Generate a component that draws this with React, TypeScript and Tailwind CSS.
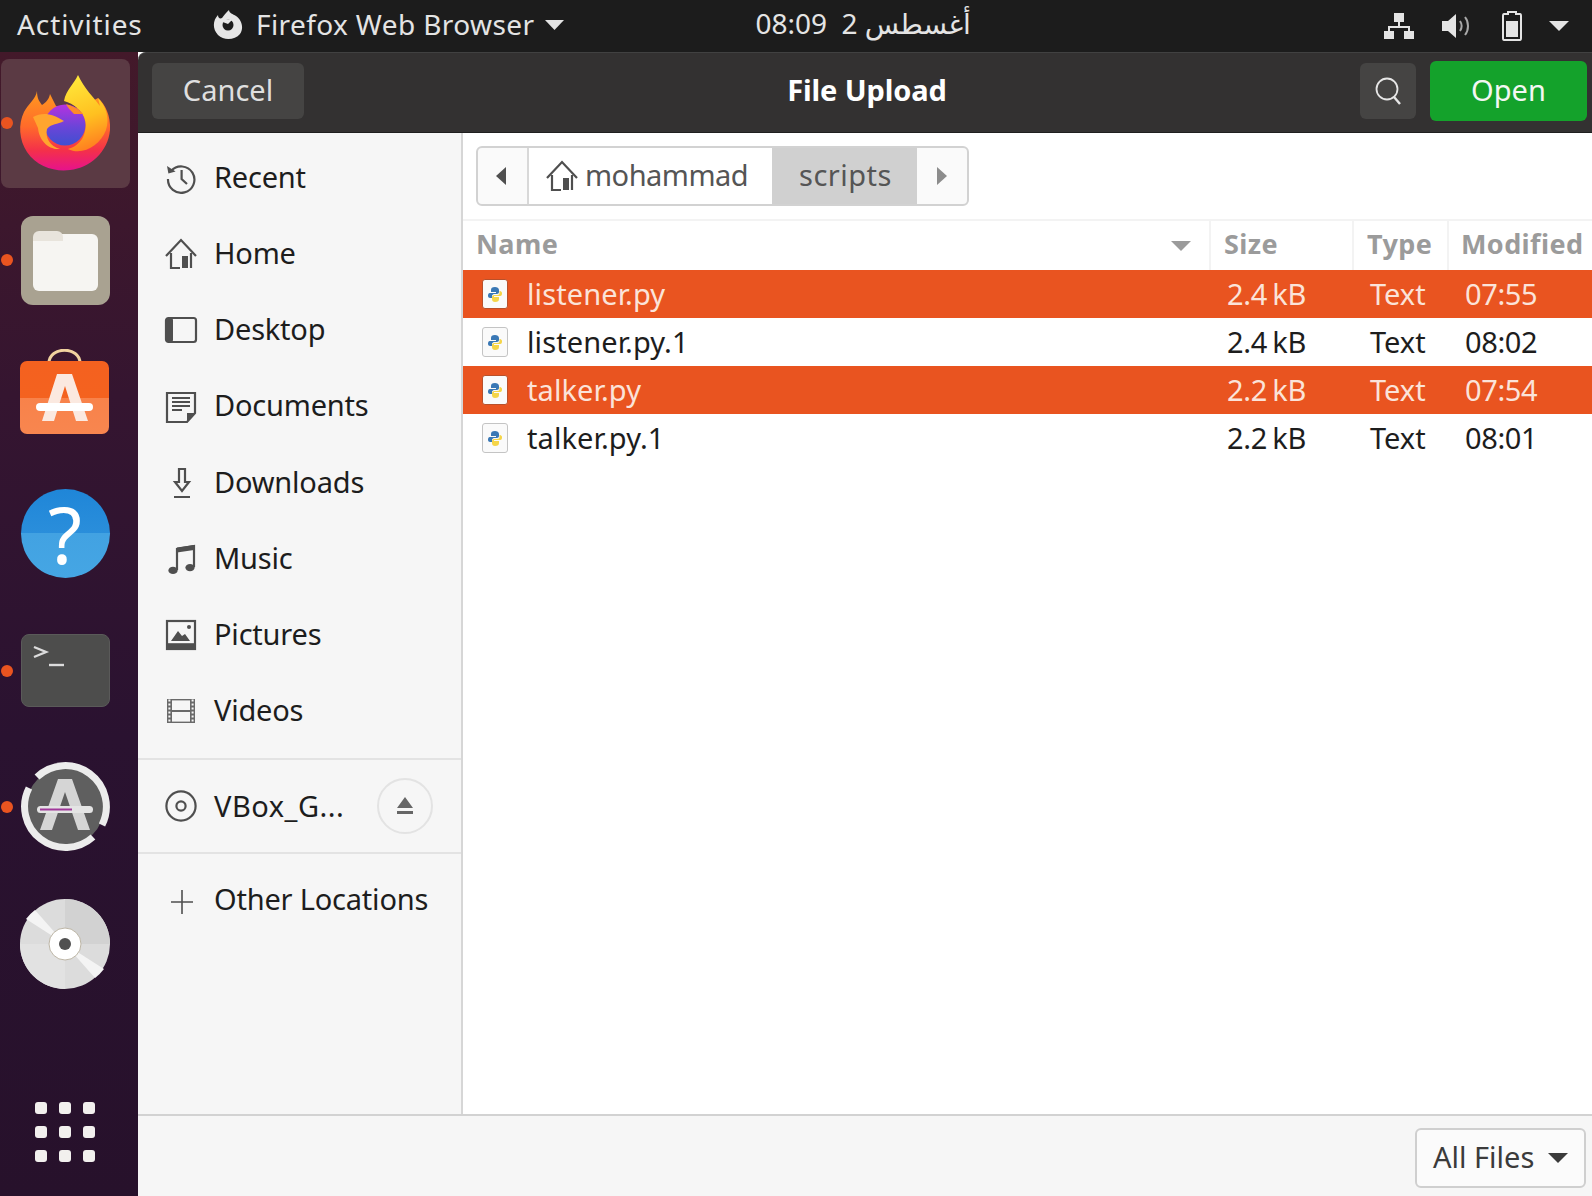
import React from 'react';

const uiFont = "font-['Noto_Sans','Open_Sans',sans-serif]";

function FirefoxIcon() {
  return (
    <svg width="110" height="110" viewBox="0 0 110 110" className="-my-2">
      <defs>
        <linearGradient id="ffBody" x1="0.5" y1="0" x2="0.5" y2="1">
          <stop offset="0" stopColor="#ff9a1f" />
          <stop offset="0.45" stopColor="#ff6a2a" />
          <stop offset="0.75" stopColor="#f4304a" />
          <stop offset="1" stopColor="#e6128c" />
        </linearGradient>
        <linearGradient id="ffFlame" x1="0.4" y1="0" x2="0.6" y2="1">
          <stop offset="0" stopColor="#ffe83a" />
          <stop offset="0.55" stopColor="#ffc020" />
          <stop offset="1" stopColor="#ff7a20" />
        </linearGradient>
        <linearGradient id="ffGlobe" x1="0.5" y1="0" x2="0.5" y2="1">
          <stop offset="0" stopColor="#b632e0" />
          <stop offset="0.55" stopColor="#6a45d8" />
          <stop offset="1" stopColor="#3f4fd0" />
        </linearGradient>
      </defs>
      <path d="M27 23 C26 31 18 36 14 44 C8 56 9 72 17 84 C27 99 45 104 60 102 C80 100 98 84 100 62 C101 48 95 36 88 30 L70 40 L46 38 L40 26 C39 32 35 35 32 37 C29 33 27 30 27 23 Z" fill="url(#ffBody)" />
      <path d="M68 7 C64 16 56 22 54 33 C64 36 72 42 75 52 C78 66 70 78 58 81 C72 88 90 78 96 62 C100 50 96 38 88 30 L90 38 C84 30 74 20 68 7 Z" fill="url(#ffFlame)" />
      <circle cx="55" cy="57" r="20.5" fill="url(#ffGlobe)" />
      <path d="M56 36 C62 38 68 40 73 46 L64 46 C60 42 58 40 56 36 Z" fill="#ff8a2a" />
      <path d="M23 49 C32 44 42 45 54 53 C47 57 42 55 37 61 C35 70 40 78 50 81 C38 82 29 72 28 60 Z" fill="#ffa52e" />
    </svg>
  );
}

function FilesIcon() {
  return (
    <div className="w-[89px] h-[89px] rounded-xl bg-[#a9a291] flex items-center justify-center relative">
      <div className="w-[65px] h-[57px] rounded-md bg-[#f6f5f2] mt-1" />
      <div className="absolute left-[12px] top-[15px] w-[30px] h-[10px] rounded-t-md bg-[#e8e4dc]" />
    </div>
  );
}

function SoftwareIcon() {
  return (
    <svg width="90" height="85" viewBox="0 0 90 85" className="-translate-y-[5px]">
      <defs>
        <linearGradient id="bag" x1="0" y1="0" x2="0" y2="1">
          <stop offset="0" stopColor="#f4611f" />
          <stop offset="0.5" stopColor="#f4621f" />
          <stop offset="0.5" stopColor="#f8824a" />
          <stop offset="1" stopColor="#f8864f" />
        </linearGradient>
      </defs>
      <path d="M29 14 C29 -3 60 -3 60 14" fill="none" stroke="#f1d29f" strokeWidth="3" />
      <rect x="0" y="12" width="89" height="73" rx="7" fill="url(#bag)" />
      <path d="M37 25 H52 L68 72 H56 L45 37 L34 72 H22 Z" fill="#fbe9e0" />
      <rect x="16" y="54" width="57" height="8" rx="4" fill="#ffffff" />
    </svg>
  );
}

function HelpIcon() {
  return (
    <div className="w-[89px] h-[89px] rounded-full bg-[linear-gradient(#1f86d8_0%,#2a8edb_50%,#42a2e2_50%,#45a6e4_100%)] flex items-center justify-center text-white text-[78px] leading-none">
      ?
    </div>
  );
}

function TerminalIcon() {
  return (
    <div className="w-[89px] h-[73px] rounded-lg bg-[#4d4d4c] border border-[#5a5a59] relative">
      <svg className="absolute left-[11px] top-[10px]" width="32" height="24" viewBox="0 0 32 24">
        <path d="M1 2 L13 7 L1 12" fill="none" stroke="#dcdcdc" strokeWidth="2.4" />
        <path d="M16 20 H31" stroke="#dcdcdc" strokeWidth="2.4" />
      </svg>
    </div>
  );
}

function UpdaterIcon() {
  return (
    <svg width="90" height="90" viewBox="0 0 90 90">
      <circle cx="45" cy="45" r="39" fill="#5f5f5f" />
      <path d="M17 15 A41 41 0 0 1 82 63 M73 75 A41 41 0 0 1 9 26" fill="none" stroke="#ececec" strokeWidth="7" />
      <path d="M38 17 H52 L70 68 H58 L45 30 L32 68 H20 Z" fill="#d5d5d5" />
      <rect x="17" y="44" width="56" height="7" rx="3.5" fill="#e4e4e4" />
      <rect x="20" y="46.5" width="32" height="2" fill="#a0389a" />
    </svg>
  );
}

function DiscIcon() {
  return (
    <svg width="90" height="90" viewBox="0 0 90 90">
      <circle cx="45" cy="45" r="45" fill="#dcdcdc" />
      <path d="M45 45 L45 0 A45 45 0 0 1 90 45 Z" fill="#d2d2d2" />
      <path d="M45 45 L45 90 A45 45 0 0 1 0 45 Z" fill="#e2e2e2" />
      <path d="M45 45 L6 20 A45 45 0 0 1 15 11 Z" fill="#f4f4f4" />
      <path d="M45 45 L84 70 A45 45 0 0 1 75 79 Z" fill="#f4f4f4" />
      <circle cx="45" cy="45" r="16" fill="#ffffff" stroke="#bdb6a6" strokeWidth="1" />
      <circle cx="45" cy="45" r="6" fill="#505050" />
    </svg>
  );
}

function Dock() {
  const items = [
    { key: 'firefox', icon: <FirefoxIcon />, running: true, active: true },
    { key: 'files', icon: <FilesIcon />, running: true },
    { key: 'software', icon: <SoftwareIcon /> },
    { key: 'help', icon: <HelpIcon /> },
    { key: 'terminal', icon: <TerminalIcon />, running: true },
    { key: 'updater', icon: <UpdaterIcon />, running: true },
    { key: 'disc', icon: <DiscIcon /> },
  ];
  return (
    <div className="w-[138px] shrink-0 flex flex-col pt-[3px] pb-[34px] bg-[linear-gradient(#43192a_0%,#351530_30%,#2a1230_60%,#27112b_100%)]">
      {items.map((item) => (
        <div key={item.key} className="relative h-[136.8px] flex items-center justify-center">
          {item.active && <div className="absolute left-[1px] top-[4px] w-[129px] h-[129px] rounded-lg bg-[#5b3a44]" />}
          {item.running && <div className="absolute left-px top-1/2 -mt-[6px] w-3 h-3 rounded-full bg-[#e95420]" />}
          <div className="relative -ml-[8px] flex items-center justify-center">{item.icon}</div>
        </div>
      ))}
      <div className="mt-auto ml-[35px] grid grid-cols-3 gap-3 w-[60px]">
        {Array.from({ length: 9 }).map((_, i) => (
          <div key={i} className="w-3 h-3 rounded-[3px] bg-[#f2f0ee]" />
        ))}
      </div>
    </div>
  );
}

function TopBar() {
  return (
    <div className="h-[52px] shrink-0 bg-[#1c1c1c] text-[#e4e4e4] flex items-center text-[28px] whitespace-nowrap">
      <span className="ml-[17px] w-[195px] tracking-[0.9px] pb-[5px]">Activities</span>
      <svg width="32" height="32" viewBox="0 0 32 32" className="-mt-1">
        <path d="M17 2 C17 5 21 6 24 8 C30 12 32 20 28 26 C23 32 12 33 6 27 C0 21 1 12 6 7 C6 10 8 11 10 10 C12 7 14 5 17 2 Z" fill="#e6e6e6" />
        <circle cx="16" cy="17" r="5.5" fill="#1c1c1c" />
        <path d="M8 13 C12 11 16 11 20 12 L16 16 Z" fill="#e6e6e6" />
      </svg>
      <span className="ml-[12px] tracking-[0.4px] pb-[5px]">Firefox Web Browser</span>
      <svg width="19" height="10" viewBox="0 0 19 10" className="ml-[11px] -mt-[3px]">
        <path d="M0 0 H19 L9.5 10 Z" fill="#e4e4e4" />
      </svg>
      <span className="ml-[191px] font-['Noto_Sans','DejaVu_Sans',sans-serif] text-[28px] tracking-[1px] pb-[7px]">08:09&nbsp; 2 أغسطس</span>
      <div className="ml-auto flex items-center">
        <svg width="32" height="28" viewBox="0 0 32 28">
          <path d="M11 1 H21 V10 H11 Z M1 19 H11 V27 H1 Z M21 19 H31 V27 H21 Z" fill="#e4e4e4" />
          <path d="M16 10 V15 M6 19 V15 H26 V19" fill="none" stroke="#e4e4e4" strokeWidth="2" />
        </svg>
        <svg width="30" height="28" viewBox="0 0 30 28" className="ml-[26px]">
          <path d="M1 9 H7 L15 2 V26 L7 19 H1 Z" fill="#e4e4e4" />
          <path d="M19 9 C21 12 21 16 19 19 M24 5 C28 10 28 18 24 23" fill="none" stroke="#a8a8a8" strokeWidth="2" />
        </svg>
        <svg width="20" height="30" viewBox="0 0 20 30" className="ml-[31px]">
          <path d="M6 1 H14 V3 H18 C19 3 19 4 19 5 V27 C19 28 19 29 18 29 H2 C1 29 1 28 1 27 V5 C1 4 1 3 2 3 H6 Z" fill="none" stroke="#e4e4e4" strokeWidth="2" />
          <rect x="4" y="10" width="12" height="16" fill="#e4e4e4" />
        </svg>
        <svg width="20" height="10" viewBox="0 0 20 10" className="ml-[27px] mr-[23px]">
          <path d="M0 0 H20 L10 10 Z" fill="#e4e4e4" />
        </svg>
      </div>
    </div>
  );
}

const stroke = { fill: 'none', stroke: '#4f4f4f', strokeWidth: 1.1 };

const sidebarIcons: Record<string, React.ReactNode> = {
  Recent: (
    <>
      <path d="M3.6 5 A6.6 6.6 0 1 1 2 9" {...stroke} />
      <path d="M1.5 2.5 L2.2 6.2 L5.8 5.2 Z" fill="#4f4f4f" />
      <path d="M8.8 4.5 V9 L11.5 11.5" {...stroke} />
    </>
  ),
  Home: (
    <>
      <path d="M1 9.5 L8.5 1.5 L16 9.5" {...stroke} />
      <path d="M3.5 8 V15.5 H8 M13.5 8 V15.5" {...stroke} />
      <rect x="9" y="9.5" width="3" height="6" fill="#4f4f4f" />
    </>
  ),
  Desktop: (
    <>
      <rect x="1" y="2.5" width="15" height="12" rx="1.2" {...stroke} />
      <rect x="1" y="2.5" width="3.5" height="12" rx="1" fill="#4f4f4f" />
    </>
  ),
  Documents: (
    <>
      <path d="M1.5 1.5 H15.5 V11.5 L11.5 16 H1.5 Z" {...stroke} />
      <path d="M4 4 H13 M4 6 H13 M4 8 H13 M4 10 H9" stroke="#4f4f4f" strokeWidth="0.9" />
      <path d="M15.5 11.5 H11.5 V16 Z" fill="#4f4f4f" />
    </>
  ),
  Downloads: (
    <>
      <path d="M7.5 1.5 H10.5 V8 H12.5 L9 12.5 L5.5 8 H7.5 Z" {...stroke} />
      <path d="M5 15.5 H13" stroke="#4f4f4f" strokeWidth="1" />
    </>
  ),
  Music: (
    <>
      <path d="M6.5 14 V3.5 L15 2 V12.5" {...stroke} />
      <path d="M6.5 2.8 L15 1.5 V4 L6.5 5.3 Z" fill="#4f4f4f" />
      <ellipse cx="4.5" cy="14.2" rx="2.3" ry="1.8" fill="#4f4f4f" />
      <ellipse cx="13" cy="12.8" rx="2.3" ry="1.8" fill="#4f4f4f" />
    </>
  ),
  Pictures: (
    <>
      <rect x="1.5" y="1.5" width="14" height="14" {...stroke} />
      <rect x="1.5" y="12.6" width="14" height="3" fill="#4f4f4f" />
      <path d="M3.5 11.5 L7 6.5 L9 9 L10.5 8 L13 11.5 Z" fill="#4f4f4f" />
      <circle cx="12.5" cy="4.5" r="1" fill="#4f4f4f" />
    </>
  ),
  Videos: (
    <>
      <rect x="1.5" y="2.5" width="14" height="12" fill="#6a6a6a" />
      <rect x="4" y="3.2" width="9" height="4.8" fill="#f6f6f6" />
      <rect x="4" y="9" width="9" height="4.8" fill="#f6f6f6" />
      <path d="M2.7 2.8 V14.5 M14.3 2.8 V14.5" stroke="#f6f6f6" strokeWidth="1" strokeDasharray="1 1" />
    </>
  ),
  VBox: (
    <>
      <circle cx="8.5" cy="8.5" r="7.3" {...stroke} />
      <circle cx="8.5" cy="8.5" r="2.3" {...stroke} />
    </>
  ),
  Other: <path d="M9 3 V15 M3.5 9 H14.5" stroke="#4f4f4f" strokeWidth="0.8" fill="none" />,
};

function SidebarIcon({ name }: { name: string }) {
  return (
    <svg width="34" height="34" viewBox="0 0 17 17" className="shrink-0">
      {sidebarIcons[name]}
    </svg>
  );
}

function Sidebar() {
  const places = ['Recent', 'Home', 'Desktop', 'Documents', 'Downloads', 'Music', 'Pictures', 'Videos'];
  return (
    <div className="w-[325px] shrink-0 bg-[#f6f6f6] border-r-2 border-[#d6d6d6] flex flex-col text-[#1d1d1d] text-[29px] tracking-[-0.2px]">
      <div className="pt-[7px] pb-[8px]">
        {places.map((name) => (
          <div key={name} className="h-[76.2px] flex items-center pl-[26px] gap-[16px]">
            <SidebarIcon name={name} />
            <span className="pb-[3px]">{name}</span>
          </div>
        ))}
      </div>
      <div className="h-[96px] border-y-2 border-[#e3e3e3] flex items-center pl-[26px] pr-[28px] gap-[16px]">
        <SidebarIcon name="VBox" />
        <span className="tracking-[0.5px]">VBox_G...</span>
        <div className="ml-auto w-[56px] h-[56px] rounded-full border-2 border-[#e3e3e3] flex items-center justify-center">
          <svg width="18" height="20" viewBox="0 0 18 20">
            <path d="M9 1 L17 12 H1 Z M1 15 H17 V18 H1 Z" fill="#666666" />
          </svg>
        </div>
      </div>
      <div className="h-[94px] flex items-center pl-[26px] gap-[16px]">
        <SidebarIcon name="Other" />
        <span className="pb-[3px]">Other Locations</span>
      </div>
    </div>
  );
}

function PythonFileIcon({ selected }: { selected: boolean }) {
  return (
    <div className={`w-[26px] h-[30px] rounded-[3px] bg-[#fafafa] flex items-center justify-center border ${selected ? 'border-[#b9502a]' : 'border-[#c4c4c4]'}`}>
      <svg width="16" height="17" viewBox="0 0 16 17">
        <path d="M8 1 C5 1 4 2 4 4 V6 H9 V7 H3 C1 7 1 9 1 10 C1 11 2 12 3 12 H5 V10 C5 9 6 8 7 8 H10 C11 8 12 7 12 6 V4 C12 2 10 1 8 1 Z" fill="#3a78b5" />
        <path d="M8 16 C11 16 12 15 12 13 V11 H7 V10 H13 C15 10 15 8 15 7 C15 6 14 5 13 5 H12.5 V7 C12.5 8 12 9 10 9 H7 C6 9 5 10 5 11 V13 C5 15 6 16 8 16 Z" fill="#f5d548" />
      </svg>
    </div>
  );
}

const files = [
  { name: 'listener.py', size: '2.4 kB', modified: '07:55', selected: true },
  { name: 'listener.py.1', size: '2.4 kB', modified: '08:02', selected: false },
  { name: 'talker.py', size: '2.2 kB', modified: '07:54', selected: true },
  { name: 'talker.py.1', size: '2.2 kB', modified: '08:01', selected: false },
];

function PathBar() {
  return (
    <div className="h-[88px] shrink-0 border-b-2 border-[#f3f3f3] pl-[13px] pt-[13px]">
      <div className="w-[493px] h-[60px] flex rounded-md border-2 border-[#d2d2d2] bg-[#fafafa] overflow-hidden text-[29px] text-[#555555]">
        <div className="w-[51px] flex items-center justify-center border-r-2 border-[#d8d8d8]">
          <svg width="12" height="18" viewBox="0 0 12 18" className="-ml-[4px]"><path d="M11 0 V18 L1 9 Z" fill="#4f4f4f" /></svg>
        </div>
        <div className="w-[243px] flex items-center pl-[16px] gap-[6px] bg-white tracking-[-0.5px]">
          <svg width="34" height="34" viewBox="0 0 17 17">{sidebarIcons.Home}</svg>
          <span className="pb-[3px]">mohammad</span>
        </div>
        <div className="w-[145px] flex items-center justify-center bg-[#d0d0d0] tracking-[0.5px] pb-[3px] pl-[2px]">scripts</div>
        <div className="flex-1 flex items-center justify-center">
          <svg width="12" height="18" viewBox="0 0 12 18"><path d="M1 0 V18 L11 9 Z" fill="#8c8c8c" /></svg>
        </div>
      </div>
    </div>
  );
}

function FileList() {
  return (
    <div className="flex-1 min-w-0 bg-white flex flex-col">
      <PathBar />
      <div className="h-[49px] shrink-0 flex text-[27px] font-bold text-[#9b9b9b] tracking-[0.4px]">
        <div className="w-[748px] flex items-center pl-[13px] pr-[18px] justify-between border-r-2 border-[#f3f3f3]">
          <span className="pb-[2px]">Name</span>
          <svg width="20" height="10" viewBox="0 0 20 10"><path d="M0 0 H20 L10 10 Z" fill="#9b9b9b" /></svg>
        </div>
        <div className="w-[143px] flex items-center pl-[13px] border-r-2 border-[#f3f3f3] pb-[2px]">Size</div>
        <div className="w-[95px] flex items-center pl-[13px] border-r-2 border-[#f3f3f3] pb-[2px]">Type</div>
        <div className="flex-1 flex items-center pl-[12px] whitespace-nowrap overflow-hidden pb-[2px]">Modified</div>
      </div>
      {files.map((file) => (
        <div
          key={file.name}
          className={`h-[48px] shrink-0 flex items-center text-[29px] ${file.selected ? 'bg-[#e95420] text-[#fbe3d9]' : 'text-[#1d1d1d]'}`}
        >
          <div className="w-[748px] flex items-center pl-[19px] gap-[19px] tracking-[0.1px]">
            <PythonFileIcon selected={file.selected} />
            <span>{file.name}</span>
          </div>
          <div className="w-[143px] pl-[16px] tracking-[-0.3px] [word-spacing:-2px]">{file.size}</div>
          <div className="w-[95px] pl-[16px]">Text</div>
          <div className="pl-[16px] tracking-[-0.4px]">{file.modified}</div>
        </div>
      ))}
    </div>
  );
}

function HeaderBar() {
  return (
    <div className="h-[81px] shrink-0 bg-[#333131] rounded-tl-lg border-t border-[#414141] border-b border-b-[#1f1f1f] flex items-center pl-[14px] pr-[5px] pb-[3px] text-[29px] text-[#dfdfdf]">
      <button className="w-[152px] h-[56px] rounded-md bg-[#454443] pb-[3px]">Cancel</button>
      <div className="flex-1 text-center font-bold text-white tracking-[-0.1px] pl-[70px] pb-[2px]">File Upload</div>
      <button className="w-[56px] h-[56px] rounded-md bg-[#454443] flex items-center justify-center mr-[14px]">
        <svg width="30" height="30" viewBox="0 0 30 30">
          <circle cx="14" cy="13" r="10.5" fill="none" stroke="#e6e6e6" strokeWidth="1.8" />
          <path d="M21 21 L27 28" stroke="#e6e6e6" strokeWidth="2.4" />
        </svg>
      </button>
      <button className="w-[157px] h-[60px] rounded-md bg-[#14a22b] text-[#f3f7f3] pb-[3px]">Open</button>
    </div>
  );
}

function Footer() {
  return (
    <div className="h-[82px] shrink-0 bg-[#f6f6f6] border-t-2 border-[#d2d2d2] flex items-center justify-end pr-[6px] pt-[4px]">
      <div className="w-[171px] h-[60px] rounded-md border-2 border-[#cfcfcf] bg-[#fbfbfb] flex items-center pl-[16px] gap-[14px] text-[29px] text-[#3b3b3b]">
        <span className="pb-[3px]">All Files</span>
        <svg width="20" height="10" viewBox="0 0 20 10"><path d="M0 0 H20 L10 10 Z" fill="#3b3b3b" /></svg>
      </div>
    </div>
  );
}

export default function App() {
  return (
    <div className={`w-[1592px] h-[1196px] overflow-hidden flex flex-col ${uiFont}`}>
      <TopBar />
      <div className="flex-1 min-h-0 flex">
        <Dock />
        <div className="flex-1 min-w-0 flex flex-col">
          <HeaderBar />
          <div className="flex-1 min-h-0 flex">
            <Sidebar />
            <FileList />
          </div>
          <Footer />
        </div>
      </div>
    </div>
  );
}
